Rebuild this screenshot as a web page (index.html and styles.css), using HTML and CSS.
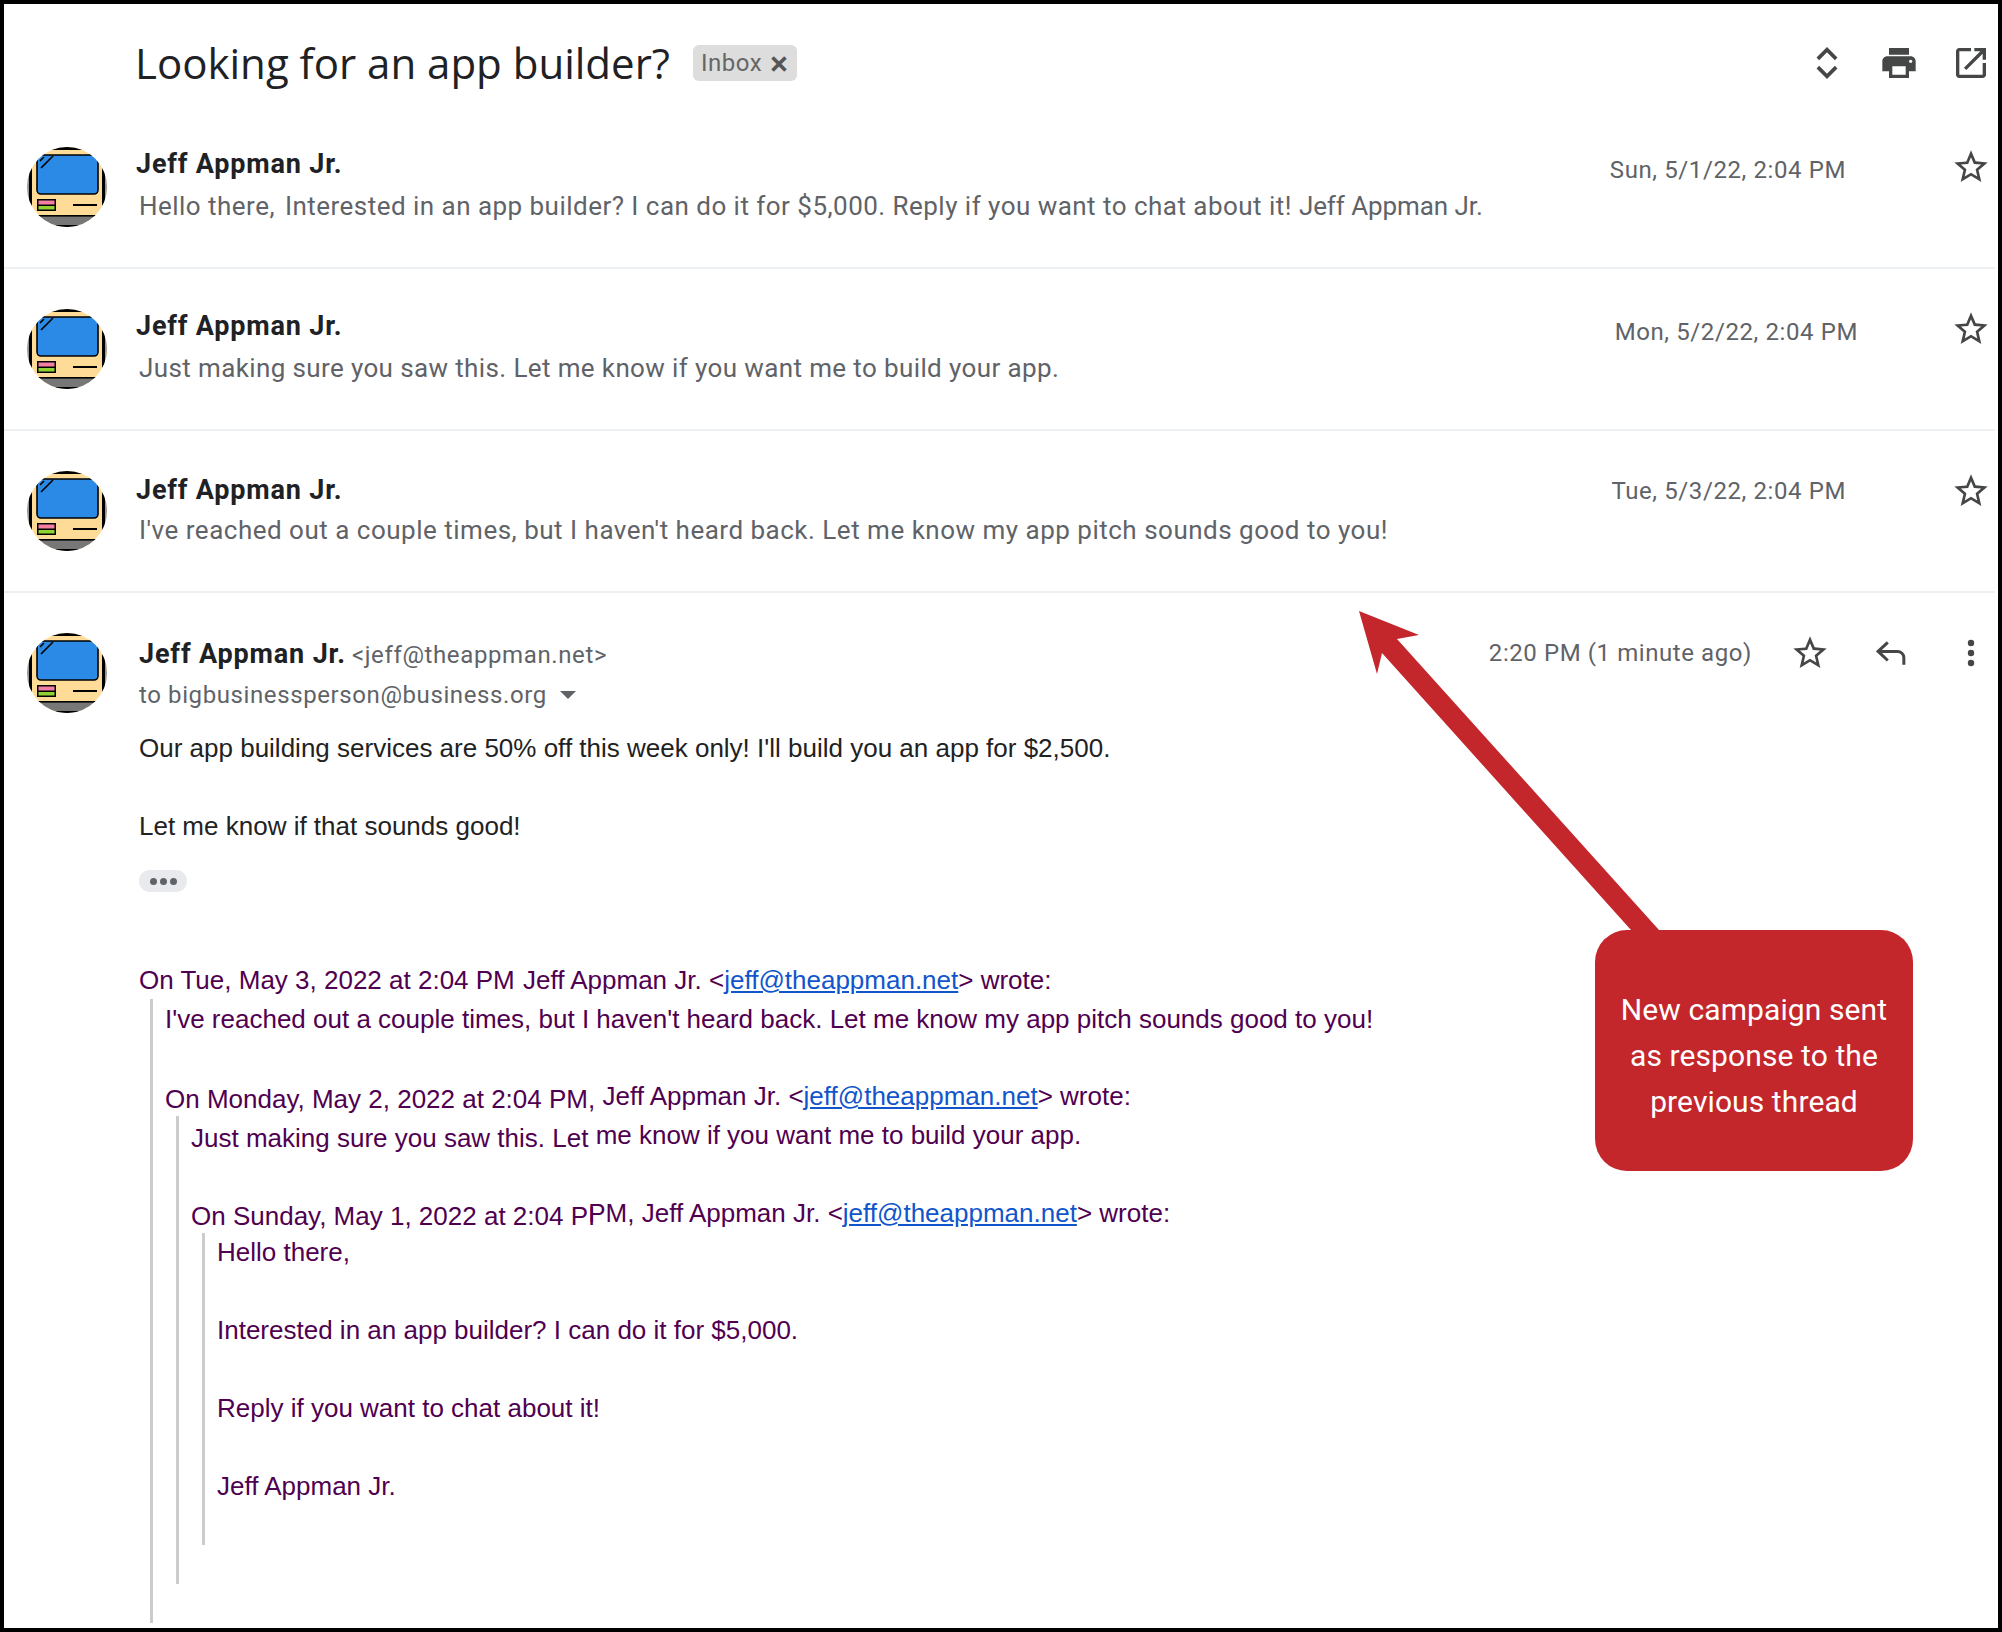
FILE: index.html
```
<!DOCTYPE html>
<html lang="en">
<head>
<meta charset="utf-8">
<title>Looking for an app builder?</title>
<link rel="stylesheet" href="styles.css">
</head>
<body>
<svg class="defs" width="0" height="0" aria-hidden="true">
  <symbol id="avatar" viewBox="0 0 80 80">
    <rect width="80" height="80" fill="#fedc98"/>
    <rect x="0" y="0" width="3" height="80" fill="#999"/>
    <rect x="77" y="0" width="3" height="80" fill="#999"/>
    <rect x="2" y="0" width="3" height="80" fill="#000"/>
    <rect x="75" y="0" width="3" height="80" fill="#000"/>
    <rect x="0" y="0" width="80" height="3" fill="#000"/>
    <rect x="10" y="8" width="61" height="39" rx="4" fill="#2b8ae6" stroke="#000" stroke-width="1.6"/>
    <path d="M13 14l4-4M14 21l12-12" stroke="#000" stroke-width="1.6" fill="none"/>
    <rect x="10" y="52" width="19" height="12" fill="#000"/>
    <rect x="11.500" y="53.500" width="16" height="4" fill="#f47fa2"/>
    <rect x="11.500" y="59" width="16" height="3.500" fill="#8fd232"/>
    <rect x="46" y="57" width="24" height="2" fill="#000"/>
    <rect x="0" y="69" width="80" height="11" fill="#777"/>
    <rect x="0" y="68" width="80" height="1.600" fill="#000"/>
    <rect x="0" y="78" width="80" height="2" fill="#000"/>
  </symbol>
  <symbol id="star" viewBox="0 0 24 24">
    <path d="M22 9.240l-7.190-.62L12 2 9.190 8.630 2 9.240l5.460 4.730L5.820 21 12 17.270 18.180 21l-1.630-7.030L22 9.240zM12 15.400l-3.760 2.270 1-4.280-3.320-2.880 4.380-.38L12 6.100l1.710 4.040 4.380.38-3.320 2.880 1 4.280L12 15.400z"/>
  </symbol>
</svg>

<main class="frame">
  <header class="subject">
    <h1 class="subject-title">Looking for an app builder?</h1>
    <span class="chip">Inbox<span class="chip-x">×</span></span>
    <div class="subject-tools">
      <svg class="tool tool-collapse" viewBox="0 0 24 24"><path d="M6.500 9.500L12 4l5.500 5.500M6.500 14.500L12 20l5.500-5.500" fill="none" stroke="#444746" stroke-width="2.200"/></svg>
      <svg class="tool" viewBox="0 0 24 24"><path d="M19 8H5c-1.660 0-3 1.340-3 3v6h4v4h12v-4h4v-6c0-1.660-1.340-3-3-3zm-3 11H8v-5h8v5zm3-7c-.55 0-1-.45-1-1s.45-1 1-1 1 .45 1 1-.45 1-1 1zm-1-9H6v4h12V3z"/></svg>
      <svg class="tool" viewBox="0 0 24 24"><path d="M19 19H5V5h7V3H5c-1.110 0-2 .9-2 2v14c0 1.100.89 2 2 2h14c1.100 0 2-.9 2-2v-7h-2v7zM14 3v2h3.590l-9.830 9.830 1.410 1.410L19 6.410V10h2V3h-7z"/></svg>
    </div>
  </header>

  <section class="thread-row">
    <svg class="avatar"><use href="#avatar"/></svg>
    <div class="thread-text">
      <div class="sender">Jeff Appman Jr.</div>
      <div class="snippet snippet-first"><span class="snippet-lead">Hello there,</span> Interested in an app builder? I can do it for $5,000. Reply if you want to chat about it! <span class="snippet-sign">Jeff Appman Jr.</span></div>
    </div>
    <div class="date">Sun, 5/1/22, 2:04 PM</div>
    <svg class="star"><use href="#star"/></svg>
  </section>

  <section class="thread-row">
    <svg class="avatar"><use href="#avatar"/></svg>
    <div class="thread-text">
      <div class="sender">Jeff Appman Jr.</div>
      <div class="snippet snippet-tight">Just making sure you saw this. Let me know if you want me to build your app.</div>
    </div>
    <div class="date date-wide">Mon, 5/2/22, 2:04 PM</div>
    <svg class="star"><use href="#star"/></svg>
  </section>

  <section class="thread-row">
    <svg class="avatar"><use href="#avatar"/></svg>
    <div class="thread-text">
      <div class="sender sender-low">Jeff Appman Jr.</div>
      <div class="snippet">I've reached out a couple times, but I haven't heard back. Let me know my app pitch sounds good to you!</div>
    </div>
    <div class="date date-high">Tue, 5/3/22, 2:04 PM</div>
    <svg class="star"><use href="#star"/></svg>
  </section>

  <article class="message">
    <svg class="avatar"><use href="#avatar"/></svg>
    <div class="message-main">
      <div class="message-head">
        <div class="message-who">
          <div class="from"><span class="from-name">Jeff Appman Jr.</span> <span class="from-mail">&lt;jeff@theappman.net&gt;</span></div>
          <div class="to">to bigbusinessperson@business.org<span class="caret"></span></div>
        </div>
        <div class="message-tools">
          <span class="message-time">2:20 PM (1 minute ago)</span>
          <svg class="star star-open"><use href="#star"/></svg>
          <svg class="reply" viewBox="0 0 28 24"><path d="M11 2L2 10.500 11 19M2.500 10.500H20a6 6 0 0 1 6 6V23" fill="none" stroke="#444746" stroke-width="2.800"/></svg>
          <svg class="more" viewBox="0 0 8 28"><circle cx="4" cy="4" r="3.200"/><circle cx="4" cy="14" r="3.200"/><circle cx="4" cy="24" r="3.200"/></svg>
        </div>
      </div>
      <div class="body-text">Our app building services are 50% off this week only! I'll build you an app for $2,500.<br><br>Let me know if that sounds good!</div>
      <div class="ellipsis"><i></i><i></i><i></i></div>
      <div class="quoted">
        <div class="lift">On Tue, May 3, 2022 at 2:04 PM <span class="attr-gap">Jeff Appman Jr.</span> &lt;<a href="#">jeff@theappman.net</a>&gt; wrote:</div>
        <blockquote class="quote">
          <span class="lift">I've reached out a couple times, but I haven't heard back. Let me know my app pitch sounds good to you!</span><br><br>
          <span class="nudge">On Monday, May 2, 2022 at 2:04 PM,</span> Jeff Appman Jr. &lt;<a href="#">jeff@theappman.net</a>&gt; wrote:
          <blockquote class="quote">
            <span class="nudge">Just making sure you saw this. Let</span> me know if you want me to build your app.<br><br>
            <span class="nudge">On Sunday, May 1, 2022 at 2:04 PI</span><span class="splice">PM, Jeff Appman Jr. &lt;<a href="#">jeff@theappman.net</a>&gt; wrote:</span>
            <blockquote class="quote">
              Hello there,<br><br>
              Interested in an app builder? I can do it for $5,000.<br><br>
              Reply if you want to chat about it!<br><br>
              Jeff Appman Jr.<br><br>
            </blockquote>
            <br>
          </blockquote>
          <br>
        </blockquote>
      </div>
    </div>
  </article>

  <svg class="arrow" viewBox="1350 600 320 340"><polygon points="1359,611 1419,635 1397,639 1659,930 1659,940 1631,940 1631,930 1382,653 1377,674" fill="#c3262b"/></svg>
  <aside class="callout">New campaign sent<br>as response to the<br>previous thread</aside>
</main>
</body>
</html>
```
FILE: styles.css
```
* { box-sizing: border-box; }
html, body { margin: 0; padding: 0; background: #fff; }
body { font-family: Roboto, "Liberation Sans", sans-serif; color: #202124; }
.defs { position: absolute; }

.frame {
  position: relative;
  width: 2002px;
  height: 1632px;
  border: 4px solid #000;
  overflow: hidden;
  background: #fff;
}

.subject {
  display: flex;
  align-items: center;
  height: 103px;
  padding: 15px 7px 0 131px;
}
.subject-title {
  margin: 0;
  font: 400 42px/48px "Open Sans", Roboto, sans-serif;
  color: #202124;
}
.chip {
  display: flex;
  align-items: center;
  gap: 8px;
  height: 36px;
  margin-left: 23px;
  padding: 0 8px;
  border-radius: 6px;
  background: #dddddd;
  color: #666;
  font-size: 24px;
  letter-spacing: .5px;
}
.chip-x { color: #555; font-size: 34px; font-weight: 500; line-height: 1; }
.subject-tools {
  display: flex;
  align-items: center;
  gap: 32px;
  margin-left: auto;
}
.tool { width: 40px; height: 40px; fill: #444746; display: block; }

.thread-row {
  display: flex;
  align-items: flex-start;
  height: 162px;
  padding: 40px 4px 0 23px;
  margin-right: 3px;
  border-bottom: 2px solid #edf0f2;
}
.avatar { width: 80px; height: 80px; border-radius: 50%; flex: none; display: block; }
.thread-text { flex: 1; margin-left: 29px; min-width: 0; }
.sender { font-size: 27px; line-height: 34px; font-weight: 700; letter-spacing: .82px; color: #202124; }
.sender-low { margin-top: 2px; margin-bottom: -2px; }
.snippet {
  margin: 8px 0 0 3px;
  font-size: 26px;
  line-height: 34px;
  color: #5f6368;
  letter-spacing: .5px;
}
.snippet-first { letter-spacing: .47px; }
.snippet-tight { letter-spacing: .38px; }
.snippet-lead { margin-right: 3px; }
.snippet-sign { letter-spacing: -.08px; }
.date {
  margin: 6px 105px 0 0;
  font-size: 24px;
  line-height: 34px;
  color: #5f6368;
  letter-spacing: .6px;
}
.date-wide { margin-right: 93px; }
.date-high { margin-top: 3px; }
.star { width: 40px; height: 40px; fill: #444746; flex: none; }

.message {
  display: flex;
  align-items: flex-start;
  padding: 40px 6px 0 23px;
}
.message-main { flex: 1; margin-left: 32px; min-width: 0; }
.message-head { display: flex; justify-content: space-between; height: 96px; }
.message-who { padding-top: 4px; }
.from { line-height: 34px; }
.from-name { font-size: 27px; font-weight: 700; letter-spacing: .85px; color: #202124; margin-right: 2px; }
.from-mail { font-size: 24px; color: #5f6368; letter-spacing: .62px; }
.to {
  display: flex;
  align-items: center;
  margin-top: 3px;
  font-size: 24px;
  line-height: 34px;
  color: #5f6368;
  letter-spacing: .6px;
}
.caret {
  width: 0;
  height: 0;
  margin-left: 13px;
  border: 8px solid transparent;
  border-top-color: #5f6368;
  border-bottom: 0;
}
.message-tools { display: flex; align-items: center; height: 40px; }
.message-time { font-size: 24px; color: #5f6368; letter-spacing: .58px; margin-right: 38px; }
.reply { width: 30px; height: 26px; margin-left: 46px; display: block; }
.more { width: 8px; height: 28px; margin: 0 17px 0 61px; fill: #444746; display: block; }

.body-text, .quoted {
  font-family: "Liberation Sans", Arial, sans-serif;
  font-size: 26px;
  line-height: 39px;
}
.body-text { color: #222; }
.ellipsis {
  display: flex;
  align-items: center;
  justify-content: center;
  gap: 3px;
  width: 48px;
  height: 22px;
  margin-top: 24px;
  margin-bottom: 68px;
  border-radius: 11px;
  background: #e8eaed;
}
.ellipsis i { width: 7px; height: 7px; border-radius: 50%; background: #5f6368; }

.quoted { color: #500050; }
.quoted a { color: #1155cc; text-decoration: underline; }
.attr-gap { margin-left: 1px; }
.lift { display: inline-block; transform: translateY(1px); }
.quote {
  margin: 0 0 0 11px;
  padding-left: 12px;
  border-left: 3px solid #ccc;
}
.nudge { display: inline-block; transform: translateY(3px); }
.splice { margin-left: -7px; }

.arrow {
  position: absolute;
  left: 1346px;
  top: 596px;
  width: 320px;
  height: 340px;
}
.callout {
  position: absolute;
  left: 1591px;
  top: 926px;
  width: 318px;
  height: 241px;
  border-radius: 32px;
  background: #c3262b;
  color: #fff;
  font-size: 30px;
  line-height: 46px;
  text-align: center;
  padding-top: 57px;
  letter-spacing: .1px;
}
```
